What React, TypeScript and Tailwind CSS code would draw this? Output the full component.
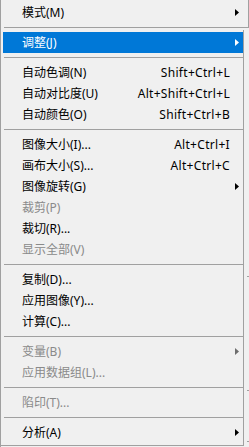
import React from 'react';

type Item =
  | { sep: true }
  | { sep?: false; label: string; shortcut?: string; sub?: boolean; disabled?: boolean; active?: boolean };

const items: Item[] = [
  { label: '调整(J)', sub: true, active: true },
  { sep: true },
  { label: '自动色调(N)', shortcut: 'Shift+Ctrl+L' },
  { label: '自动对比度(U)', shortcut: 'Alt+Shift+Ctrl+L' },
  { label: '自动颜色(O)', shortcut: 'Shift+Ctrl+B' },
  { sep: true },
  { label: '图像大小(I)...', shortcut: 'Alt+Ctrl+I' },
  { label: '画布大小(S)...', shortcut: 'Alt+Ctrl+C' },
  { label: '图像旋转(G)', sub: true },
  { label: '裁剪(P)', disabled: true },
  { label: '裁切(R)...' },
  { label: '显示全部(V)', disabled: true },
  { sep: true },
  { label: '复制(D)...' },
  { label: '应用图像(Y)...' },
  { label: '计算(C)...' },
  { sep: true },
  { label: '变量(B)', sub: true, disabled: true },
  { label: '应用数据组(L)...', disabled: true },
  { sep: true },
  { label: '陷印(T)...', disabled: true },
  { sep: true },
  { label: '分析(A)', sub: true },
];

function Arrow({ color }: { color: string }) {
  return (
    <svg width="4" height="7" viewBox="0 0 4 7" className="ml-[5px] block">
      <polygon points="0,0 4,3.5 0,7" fill={color} />
    </svg>
  );
}

function Row({ label, shortcut, sub, disabled, active }: { label: string; shortcut?: string; sub?: boolean; disabled?: boolean; active?: boolean }) {
  const color = active ? 'text-white' : disabled ? 'text-[#8a8a8a]' : 'text-black';
  return (
    <div className={`ml-[2px] w-[240px] h-[21px] flex items-center pl-[19px] ${active ? 'bg-[#0078d7]' : ''} ${color}`}>
      <span className="flex-1 whitespace-nowrap">{label}</span>
      {shortcut && <span className="whitespace-nowrap tracking-[0.3px]">{shortcut}</span>}
      <span className="w-[13px] flex items-center">
        {sub && <Arrow color={active ? '#ffffff' : disabled ? '#6d6d6d' : '#000000'} />}
      </span>
    </div>
  );
}

export default function App() {
  return (
    <div
      className="w-[249px] h-[447px] bg-[#f0f0f0] border-l border-[#a0a0a0] overflow-hidden text-[12px] leading-[21px]"
      style={{ fontFamily: '"Noto Sans", "Noto Sans CJK SC", sans-serif' }}
    >
      {/* top row belongs to the wider menu */}
      <div className="h-[28px] pt-[2px] border-r border-[#a0a0a0]">
        <Row label="模式(M)" sub />
        <div className="mt-[4px] ml-[3px] h-px bg-[#a0a0a0]" />
      </div>

      <div className="flex mt-[2px]">
        <div className="w-[243px] border-r border-b border-[#a0a0a0] pt-[2px] pb-[2px]">
          {items.map((it, i) =>
            it.sep ? (
              <div key={i} className="h-[9px] pt-[4px] pl-[3px]">
                <div className="h-px bg-[#a0a0a0]" />
              </div>
            ) : (
              <Row key={i} {...it} />
            )
          )}
        </div>
        {/* edge of the menu behind */}
        <div className="w-[5px] flex flex-col">
          <div className="mt-[246px] ml-[3px] w-[2px] h-px bg-[#a0a0a0]" />
          <div className="mt-[113px] ml-[3px] w-[2px] h-px bg-[#a0a0a0]" />
          <div className="mt-[50px] ml-[3px] w-[2px] h-px bg-[#a0a0a0]" />
        </div>
      </div>
    </div>
  );
}
